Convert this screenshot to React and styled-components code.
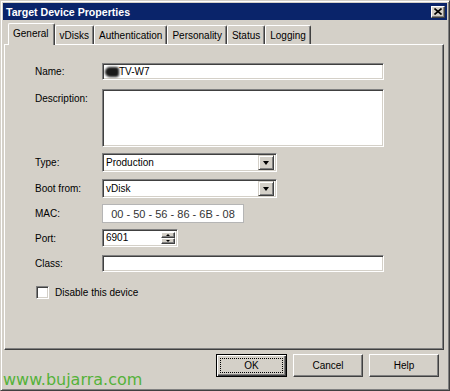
import React from "react";
import styled, { createGlobalStyle } from "styled-components";

const GlobalStyle = createGlobalStyle`
  html, body {
    margin: 0;
    padding: 0;
    background: #d4d0c8;
  }
  body {
    font-family: "Liberation Sans", Arial, sans-serif;
    font-size: 10px;
    color: #000;
  }
`;

const tabs = ["General", "vDisks", "Authentication", "Personality", "Status", "Logging"];

function App() {
    return (
        <>
            <GlobalStyle />
            <Window>
                <TitleBar>
                    <Title>Target Device Properties</Title>
                    <CloseButton>
                        <svg width="8" height="7" viewBox="0 0 8 7">
                            <path d="M0.5 0.5 L7.5 6.5 M7.5 0.5 L0.5 6.5" stroke="#000" strokeWidth="1.6" />
                        </svg>
                    </CloseButton>
                </TitleBar>

                <TabStrip>
                    {tabs.map((t, i) => (
                        <Tab key={t} $active={i === 0}>{t}</Tab>
                    ))}
                </TabStrip>

                <Panel>
                    <Row $top={0}>
                        <Label>Name:</Label>
                        <TextBox $w={282} $h={17}>
                            <Blur />TV-W7
                        </TextBox>
                    </Row>
                    <Row $top={9}>
                        <Label $alignTop>Description:</Label>
                        <TextBox $w={282} $h={58} />
                    </Row>
                    <Row $top={6}>
                        <Label>Type:</Label>
                        <Select>
                            Production
                            <DropButton><Arrow /></DropButton>
                        </Select>
                    </Row>
                    <Row $top={7}>
                        <Label>Boot from:</Label>
                        <Select>
                            vDisk
                            <DropButton><Arrow /></DropButton>
                        </Select>
                    </Row>
                    <Row $top={6}>
                        <Label>MAC:</Label>
                        <MacBox>00 - 50 - 56 - 86 - 6B - 08</MacBox>
                    </Row>
                    <Row $top={6}>
                        <Label>Port:</Label>
                        <TextBox $w={76} $h={18}>
                            6901
                            <Spin>
                                <SpinPart><SmallArrow $up /></SpinPart>
                                <SpinPart><SmallArrow /></SpinPart>
                            </Spin>
                        </TextBox>
                    </Row>
                    <Row $top={8}>
                        <Label>Class:</Label>
                        <TextBox $w={282} $h={17} />
                    </Row>
                    <CheckRow>
                        <CheckBox />
                        Disable this device
                    </CheckRow>
                </Panel>

                <Footer>
                    <Button $default>
                        <FocusRect>OK</FocusRect>
                    </Button>
                    <Button>Cancel</Button>
                    <Button>Help</Button>
                </Footer>

                <Watermark>www.bujarra.com</Watermark>
            </Window>
        </>
    );
}

const Window = styled.div`
    position: relative;
    width: 450px;
    height: 391px;
    box-sizing: border-box;
    background: #d4d0c8;
    border: 1px solid;
    border-color: #d4d0c8 #404040 #404040 #d4d0c8;
    box-shadow: inset 1px 1px #fff, inset -1px -1px #808080;
    padding: 2px;
    display: flex;
    flex-direction: column;
    overflow: hidden;
`;

const TitleBar = styled.div`
    height: 17px;
    flex: none;
    background: #0a246a;
    display: flex;
    align-items: center;
    justify-content: space-between;
    padding: 0 2px 0 3px;
`;

const Title = styled.div`
    color: #fff;
    font-weight: bold;
    font-size: 10.6px;
    white-space: nowrap;
`;

const CloseButton = styled.div`
    width: 14px;
    height: 12px;
    box-sizing: border-box;
    background: #d4d0c8;
    border: 1px solid;
    border-color: #fff #404040 #404040 #fff;
    box-shadow: inset -1px -1px #808080;
    display: flex;
    align-items: center;
    justify-content: center;
`;

const TabStrip = styled.div`
    flex: none;
    height: 21px;
    margin-top: 3px;
    padding-left: 5px;
    display: flex;
    align-items: flex-end;
    position: relative;
    z-index: 1;
`;

const Tab = styled.div`
    box-sizing: border-box;
    height: ${(p) => (p.$active ? "22px" : "19px")};
    margin-bottom: ${(p) => (p.$active ? "-1px" : "0")};
    padding: ${(p) => (p.$active ? "0 5px 0 4px" : "0 4px 0 4px")};
    background: #d4d0c8;
    border-top: 1px solid #fff;
    border-left: 1px solid #fff;
    border-right: 1px solid #404040;
    box-shadow: inset -1px 0 #808080;
    border-radius: 2px 2px 0 0;
    display: flex;
    align-items: center;
    white-space: nowrap;
    padding-bottom: ${(p) => (p.$active ? "3px" : "0")};
`;

const Panel = styled.div`
    flex: none;
    height: 306px;
    box-sizing: border-box;
    margin: 0 3px 0 1px;
    border: 1px solid;
    border-color: #fff #404040 #404040 #fff;
    box-shadow: inset -1px -1px #808080;
    padding: 18px 0 0 30px;
    display: flex;
    flex-direction: column;
`;

const Row = styled.div`
    display: flex;
    margin-top: ${(p) => p.$top}px;
`;

const Label = styled.div`
    width: 67px;
    flex: none;
    align-self: ${(p) => (p.$alignTop ? "flex-start" : "center")};
    padding-top: ${(p) => (p.$alignTop ? "4px" : "0")};
`;

const sunken = `
    box-sizing: border-box;
    background: #fff;
    border: 1px solid;
    border-color: #808080 #fff #fff #808080;
    box-shadow: inset 1px 1px #404040, inset -1px -1px #d4d0c8;
`;

const TextBox = styled.div`
    ${sunken}
    width: ${(p) => p.$w}px;
    height: ${(p) => p.$h}px;
    padding: 2px 3px 0;
    display: flex;
    align-items: flex-start;
    line-height: 12px;
    position: relative;
`;

const Blur = styled.span`
    display: inline-block;
    width: 14px;
    height: 10px;
    margin: 1px 0 0 -1px;
    background: #1a1a1a;
    border-radius: 5px 3px 3px 5px;
    filter: blur(0.8px);
`;

const Select = styled.div`
    ${sunken}
    width: 175px;
    height: 19px;
    padding: 0 0 0 3px;
    display: flex;
    align-items: center;
    justify-content: space-between;
`;

const DropButton = styled.div`
    width: 16px;
    height: 15px;
    margin-right: 2px;
    box-sizing: border-box;
    background: #d4d0c8;
    border: 1px solid;
    border-color: #d4d0c8 #404040 #404040 #d4d0c8;
    box-shadow: inset 1px 1px #fff, inset -1px -1px #808080;
    display: flex;
    align-items: center;
    justify-content: center;
`;

const Arrow = styled.span`
    width: 0;
    height: 0;
    border-left: 3.5px solid transparent;
    border-right: 3.5px solid transparent;
    border-top: 4px solid #000;
`;

const MacBox = styled.div`
    box-sizing: border-box;
    width: 142px;
    height: 19px;
    background: #fff;
    border: 1px solid #b5b5b5;
    display: flex;
    align-items: center;
    justify-content: center;
    font-size: 11px;
    color: #333;
`;

const Spin = styled.div`
    position: absolute;
    right: 2px;
    top: 2px;
    bottom: 2px;
    width: 14px;
    display: flex;
    flex-direction: column;
`;

const SpinPart = styled.div`
    flex: 1;
    box-sizing: border-box;
    background: #d4d0c8;
    border: 1px solid;
    border-color: #fff #404040 #404040 #fff;
    box-shadow: inset -1px -1px #808080;
    display: flex;
    align-items: center;
    justify-content: center;
`;

const SmallArrow = styled.span`
    width: 0;
    height: 0;
    border-left: 2px solid transparent;
    border-right: 2px solid transparent;
    ${(p) => (p.$up ? "border-bottom: 2px solid #000;" : "border-top: 2px solid #000;")}
`;

const CheckRow = styled.div`
    display: flex;
    align-items: center;
    gap: 6px;
    margin: 14px 0 0 1px;
`;

const CheckBox = styled.span`
    ${sunken}
    width: 13px;
    height: 13px;
`;

const Footer = styled.div`
    flex: none;
    display: flex;
    justify-content: flex-end;
    gap: 6px;
    margin-top: 4px;
    padding-right: 8px;
`;

const Button = styled.div`
    box-sizing: border-box;
    width: ${(p) => (p.$default ? "71px" : "70px")};
    height: 23px;
    background: #d4d0c8;
    border: 1px solid;
    border-color: ${(p) => (p.$default ? "#000" : "#fff #404040 #404040 #fff")};
    box-shadow: ${(p) =>
        p.$default
            ? "inset 1px 1px #fff, inset -1px -1px #404040, inset -2px -2px #808080"
            : "inset -1px -1px #808080"};
    display: flex;
    align-items: center;
    justify-content: center;
    padding: ${(p) => (p.$default ? "3px" : "0")};
`;

const FocusRect = styled.div`
    flex: 1;
    align-self: stretch;
    border: 1px dotted #000;
    display: flex;
    align-items: center;
    justify-content: center;
`;

const Watermark = styled.div`
    position: absolute;
    left: 2px;
    bottom: 1px;
    font-family: "DejaVu Sans", Verdana, sans-serif;
    font-size: 16px;
    color: #55b23a;
    letter-spacing: 0;
    white-space: nowrap;
`;

export default App;
